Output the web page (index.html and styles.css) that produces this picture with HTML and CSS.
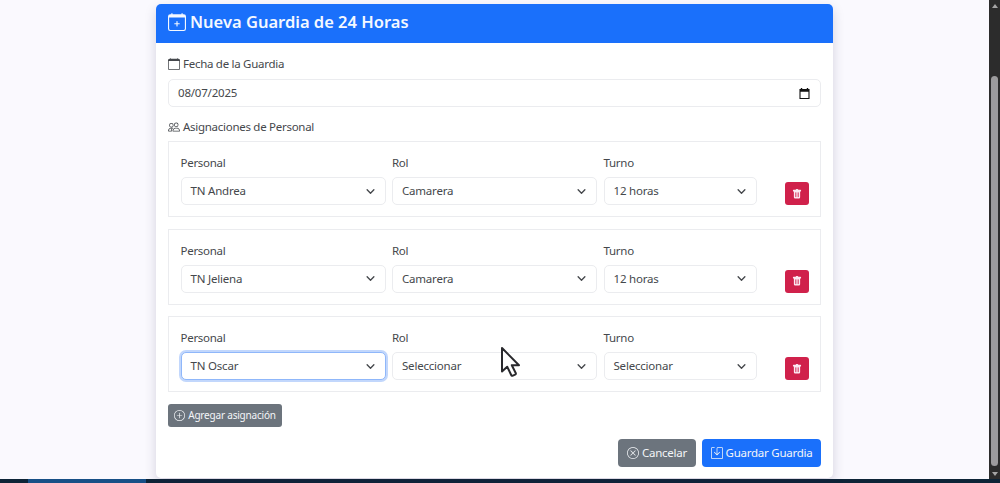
FILE: index.html
```html
<!DOCTYPE html>
<html lang="es">
<head>
  <meta charset="UTF-8">
  <meta name="viewport" content="width=device-width, initial-scale=1.0">
  <title>Nueva Guardia</title>
  <link rel="stylesheet" href="styles.css">
</head>
<body>
  <svg class="sprite" aria-hidden="true">
    <symbol id="chevron" viewBox="0 0 16 16"><path d="m2 5 6 6 6-6" fill="none" stroke="currentColor" stroke-width="2.4" stroke-linecap="round" stroke-linejoin="round"/></symbol>
    <symbol id="trash" viewBox="0 0 16 16"><path d="M2.5 1a1 1 0 0 0-1 1v1a1 1 0 0 0 1 1H3v9a2 2 0 0 0 2 2h6a2 2 0 0 0 2-2V4h.5a1 1 0 0 0 1-1V2a1 1 0 0 0-1-1H10a1 1 0 0 0-1-1H7a1 1 0 0 0-1 1zm3 4a.5.5 0 0 1 .5.5v7a.5.5 0 0 1-1 0v-7a.5.5 0 0 1 .5-.5M8 5a.5.5 0 0 1 .5.5v7a.5.5 0 0 1-1 0v-7A.5.5 0 0 1 8 5m3 .5v7a.5.5 0 0 1-1 0v-7a.5.5 0 0 1 1 0"/></symbol>
  </svg>

  <div class="screen">
    <main class="page">
      <div class="card">
        <div class="card-header">
          <svg class="icon icon-lg" viewBox="0 0 16 16"><path d="M8 7a.5.5 0 0 1 .5.5V9H10a.5.5 0 0 1 0 1H8.500v1.500a.5.5 0 0 1-1 0V10H6a.5.5 0 0 1 0-1h1.500V7.500A.5.5 0 0 1 8 7"/><path d="M3.500 0a.5.5 0 0 1 .5.5V1h8V.5a.5.5 0 0 1 1 0V1h1a2 2 0 0 1 2 2v11a2 2 0 0 1-2 2H2a2 2 0 0 1-2-2V3a2 2 0 0 1 2-2h1V.5a.5.5 0 0 1 .5-.5M1 4v10a1 1 0 0 0 1 1h12a1 1 0 0 0 1-1V4z"/></svg>
          <h1>Nueva Guardia de 24 Horas</h1>
        </div>

        <div class="card-body">
          <div class="label">
            <svg class="icon" viewBox="0 0 16 16"><path d="M3.500 0a.5.5 0 0 1 .5.5V1h8V.5a.5.5 0 0 1 1 0V1h1a2 2 0 0 1 2 2v11a2 2 0 0 1-2 2H2a2 2 0 0 1-2-2V3a2 2 0 0 1 2-2h1V.5a.5.5 0 0 1 .5-.5M1 4v10a1 1 0 0 0 1 1h12a1 1 0 0 0 1-1V4z"/></svg>
            <span>Fecha de la Guardia</span>
          </div>
          <div class="control date-input">
            <span>08/07/2025</span>
            <svg class="date-icon" viewBox="0 0 12 12"><path d="M2 0h1.500v1h5V0H10v1h1.500v11H.5V1H2zM1.700 4v6.800h8.600V4z"/></svg>
          </div>

          <div class="label group-label">
            <svg class="icon" viewBox="0 0 16 16"><path d="M15 14s1 0 1-1-1-4-5-4-5 3-5 4 1 1 1 1zm-7.978-1L7 12.996c.001-.264.167-1.030.76-1.720C8.312 10.629 9.282 10 11 10c1.717 0 2.687.63 3.240 1.276.593.69.758 1.457.76 1.720l-.008.002-.014.002zM11 7a2 2 0 1 0 0-4 2 2 0 0 0 0 4m3-2a3 3 0 1 1-6 0 3 3 0 0 1 6 0M6.936 9.280a6 6 0 0 0-1.230-.247A7 7 0 0 0 5 9c-4 0-5 3-5 4q0 1 1 1h4.216A2.240 2.240 0 0 1 5 13c0-1.010.377-2.042 1.090-2.904.243-.294.526-.569.846-.816M4.920 10A5.500 5.500 0 0 0 4 13H1c0-.26.164-1.030.76-1.724.545-.636 1.492-1.256 3.160-1.275ZM1.500 5.500a3 3 0 1 1 6 0 3 3 0 0 1-6 0m3-2a2 2 0 1 0 0 4 2 2 0 0 0 0-4"/></svg>
            <span>Asignaciones de Personal</span>
          </div>

          <div class="assignment">
            <div class="field">
              <span class="label">Personal</span>
              <div class="control select"><span>TN Andrea</span><svg><use href="#chevron"/></svg></div>
            </div>
            <div class="field">
              <span class="label">Rol</span>
              <div class="control select"><span>Camarera</span><svg><use href="#chevron"/></svg></div>
            </div>
            <div class="field">
              <span class="label">Turno</span>
              <div class="control select"><span>12 horas</span><svg><use href="#chevron"/></svg></div>
            </div>
            <button class="btn-delete" aria-label="Eliminar"><svg><use href="#trash"/></svg></button>
          </div>

          <div class="assignment">
            <div class="field">
              <span class="label">Personal</span>
              <div class="control select"><span>TN Jeliena</span><svg><use href="#chevron"/></svg></div>
            </div>
            <div class="field">
              <span class="label">Rol</span>
              <div class="control select"><span>Camarera</span><svg><use href="#chevron"/></svg></div>
            </div>
            <div class="field">
              <span class="label">Turno</span>
              <div class="control select"><span>12 horas</span><svg><use href="#chevron"/></svg></div>
            </div>
            <button class="btn-delete" aria-label="Eliminar"><svg><use href="#trash"/></svg></button>
          </div>

          <div class="assignment">
            <div class="field">
              <span class="label">Personal</span>
              <div class="control select focused"><span>TN Oscar</span><svg><use href="#chevron"/></svg></div>
            </div>
            <div class="field">
              <span class="label">Rol</span>
              <div class="control select"><span>Seleccionar</span><svg><use href="#chevron"/></svg></div>
            </div>
            <div class="field">
              <span class="label">Turno</span>
              <div class="control select"><span>Seleccionar</span><svg><use href="#chevron"/></svg></div>
            </div>
            <button class="btn-delete" aria-label="Eliminar"><svg><use href="#trash"/></svg></button>
          </div>

          <button class="btn btn-secondary btn-sm">
            <svg class="icon" viewBox="0 0 16 16"><path d="M8 15A7 7 0 1 1 8 1a7 7 0 0 1 0 14m0 1A8 8 0 1 0 8 0a8 8 0 0 0 0 16"/><path d="M8 4a.5.5 0 0 1 .5.5v3h3a.5.5 0 0 1 0 1h-3v3a.5.5 0 0 1-1 0v-3h-3a.5.5 0 0 1 0-1h3v-3A.5.5 0 0 1 8 4"/></svg>
            <span>Agregar asignación</span>
          </button>

          <div class="actions">
            <button class="btn btn-secondary btn-cancel">
              <svg class="icon" viewBox="0 0 16 16"><path d="M8 15A7 7 0 1 1 8 1a7 7 0 0 1 0 14m0 1A8 8 0 1 0 8 0a8 8 0 0 0 0 16"/><path d="M4.646 4.646a.5.5 0 0 1 .708 0L8 7.293l2.646-2.647a.5.5 0 0 1 .708.708L8.707 8l2.647 2.646a.5.5 0 0 1-.708.708L8 8.707l-2.646 2.647a.5.5 0 0 1-.708-.708L7.293 8 4.646 5.354a.5.5 0 0 1 0-.708"/></svg>
              <span>Cancelar</span>
            </button>
            <button class="btn btn-primary btn-save">
              <svg class="icon" viewBox="0 0 16 16"><path d="M2 1a1 1 0 0 0-1 1v12a1 1 0 0 0 1 1h12a1 1 0 0 0 1-1V2a1 1 0 0 0-1-1H9.500a1 1 0 0 0-1 1v7.293l2.646-2.647a.5.5 0 0 1 .708.708l-3.500 3.500a.5.5 0 0 1-.708 0l-3.500-3.500a.5.5 0 1 1 .708-.708L7.500 9.293V2a2 2 0 0 1 2-2H14a2 2 0 0 1 2 2v12a2 2 0 0 1-2 2H2a2 2 0 0 1-2-2V2a2 2 0 0 1 2-2h2.500a.5.5 0 0 1 0 1z"/></svg>
              <span>Guardar Guardia</span>
            </button>
          </div>
        </div>
      </div>
    </main>

    <div class="scrollbar">
      <span class="arrow arrow-up"></span>
      <span class="thumb"></span>
      <span class="arrow arrow-down"></span>
    </div>
  </div>
  <div class="taskbar"><span class="task-active"></span></div>

  <svg class="cursor" viewBox="0 0 22 32"><path d="M2 2v23.500l5.200-4.800 4 8.300q.5 1.200 1.700.7l2.200-1q1.100-.6.6-1.700l-3.900-7.800H19z" fill="#fff" stroke="#29292d" stroke-width="2" stroke-linejoin="round"/></svg>
</body>
</html>
```

FILE: styles.css
```css
:root {
  --primary: #1a70fb;
  --secondary: #6c747d;
  --danger: #d0214b;
  --text: #45484c;
  --border: #ebecef;
}

* {
  box-sizing: border-box;
  margin: 0;
  padding: 0;
}

body {
  height: 483px;
  overflow: hidden;
  font-family: "Noto Sans", "Open Sans", sans-serif;
  font-size: 11.5px;
  line-height: 18px;
  letter-spacing: -0.2px;
  color: var(--text);
  background: #faf9fe;
}

.sprite {
  display: none;
}

.screen {
  display: flex;
  height: 479px;
}

.page {
  flex: 1;
  padding-top: 4px;
}

.card {
  width: 677px;
  height: 474px;
  margin-left: 156px;
  background: #fff;
  border-radius: 5px;
  box-shadow: 0 5px 12px rgba(40, 30, 80, 0.18);
}

.card-header {
  display: flex;
  align-items: center;
  gap: 4px;
  height: 39px;
  padding: 0 12px 4px;
  color: #f4f8ff;
  background: var(--primary);
  border-radius: 5px 5px 0 0;
}

h1 {
  font-size: 16.5px;
  font-weight: 600;
  line-height: 20px;
  letter-spacing: 0;
}

.card-body {
  padding: 12px 12px 0;
}

.icon {
  flex: none;
  width: 12px;
  height: 12px;
  fill: currentColor;
}

.icon-lg {
  width: 18px;
  height: 18px;
}

.label {
  display: flex;
  align-items: center;
  gap: 3px;
  height: 18px;
  letter-spacing: -0.28px;
  white-space: nowrap;
}

.control {
  display: flex;
  align-items: center;
  justify-content: space-between;
  height: 28px;
  padding: 0 9px;
  background: #fff;
  border: 1px solid var(--border);
  border-radius: 5px;
  white-space: nowrap;
}

.date-input {
  margin: 6px 0 11px;
  padding-right: 10px;
}

.date-icon {
  width: 11px;
  height: 11px;
  fill: #111;
}

.group-label {
  margin-bottom: 5px;
}

.assignment {
  display: grid;
  grid-template-columns: 205px 205px 153px 24px;
  column-gap: 6.500px;
  height: 76px;
  margin-bottom: 11.600px;
  padding: 12px 0 0 11.500px;
  border: 1px solid var(--border);
}

.field .control {
  margin-top: 5px;
}

.select svg {
  width: 9px;
  height: 9px;
  margin-right: 1px;
}

.select.focused {
  border-color: #8fb7fa;
  box-shadow: 0 0 0 2px #c2d7fc;
}

.btn-delete {
  display: flex;
  align-items: center;
  justify-content: center;
  width: 24px;
  height: 23px;
  margin: 28px 0 0 22px;
  color: #fbeaf2;
  background: var(--danger);
  border: none;
  border-radius: 3px;
}

.btn-delete svg {
  width: 10px;
  height: 10px;
  fill: currentColor;
}

.btn {
  display: flex;
  align-items: center;
  justify-content: center;
  gap: 3px;
  height: 28px;
  color: #f3f5f8;
  font: inherit;
  letter-spacing: -0.25px;
  border: none;
  border-radius: 4px;
  white-space: nowrap;
}

.btn-primary {
  background: var(--primary);
}

.btn-secondary {
  background: var(--secondary);
}

.btn-sm {
  width: 114px;
  height: 23px;
  font-size: 10px;
  letter-spacing: -0.2px;
  border-radius: 3px;
}

.btn-sm .icon {
  width: 11px;
  height: 11px;
}

.btn-cancel {
  width: 78px;
}

.btn-save {
  width: 119px;
}

.actions {
  display: flex;
  justify-content: flex-end;
  gap: 6px;
  margin-top: 12px;
}

.scrollbar {
  display: flex;
  flex-direction: column;
  align-items: center;
  width: 11px;
  padding: 4px 0 3px;
  background: #2c2c2c;
}

.arrow {
  border: 3px solid transparent;
}

.arrow-up {
  border-top: 0;
  border-bottom: 4px solid #a5a5a5;
}

.arrow-down {
  border-bottom: 0;
  border-top: 4px solid #a5a5a5;
}

.thumb {
  width: 7px;
  height: 390px;
  margin: 68px 0 auto;
  background: #9c9b9d;
  border-radius: 4px;
}

.taskbar {
  height: 4px;
  padding-left: 28px;
  background: #0d2437;
}

.task-active {
  display: block;
  width: 118px;
  height: 4px;
  background: #174f86;
}

/* mouse pointer lies over the form */
.cursor {
  position: absolute;
  left: 500px;
  top: 346px;
  width: 22px;
  height: 32px;
}
```
